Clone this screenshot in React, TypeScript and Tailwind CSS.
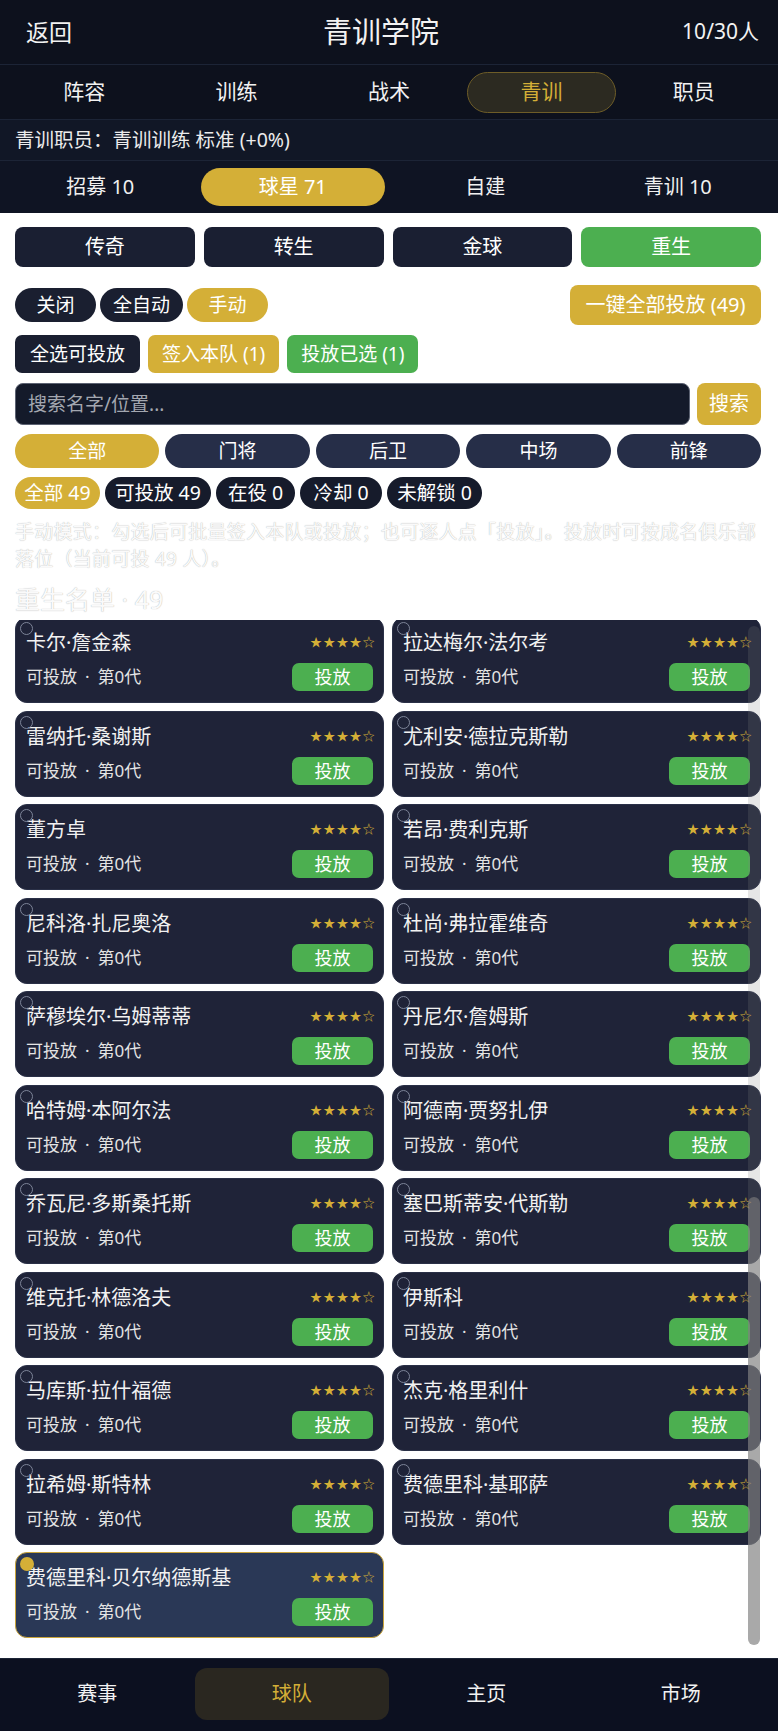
import React from "react";

const FONT = { fontFamily: '"Noto Sans", "Noto Sans CJK SC", sans-serif' };

const players = [
  "卡尔·詹金森",
  "拉达梅尔·法尔考",
  "雷纳托·桑谢斯",
  "尤利安·德拉克斯勒",
  "董方卓",
  "若昂·费利克斯",
  "尼科洛·扎尼奥洛",
  "杜尚·弗拉霍维奇",
  "萨穆埃尔·乌姆蒂蒂",
  "丹尼尔·詹姆斯",
  "哈特姆·本阿尔法",
  "阿德南·贾努扎伊",
  "乔瓦尼·多斯桑托斯",
  "塞巴斯蒂安·代斯勒",
  "维克托·林德洛夫",
  "伊斯科",
  "马库斯·拉什福德",
  "杰克·格里利什",
  "拉希姆·斯特林",
  "费德里科·基耶萨",
  "费德里科·贝尔纳德斯基",
];

function Card({ name, selected }: { name: string; selected: boolean }) {
  return (
    <div
      className={
        "relative h-[86px] rounded-[12px] pl-[10px] pr-[10px] pt-[12px] " +
        (selected
          ? "bg-[#2a3856] border-[1.5px] border-[#c9a43a]"
          : "bg-[#1f2338] border border-[#2a3047]")
      }
    >
      {selected ? (
        <div className="absolute left-[4px] top-[4px] w-[14px] h-[14px] rounded-full bg-[#d4af37]" />
      ) : (
        <div className="absolute left-[4px] top-[4px] w-[13px] h-[13px] rounded-full border-[1.5px] border-[#7d8498]" />
      )}
      <div className="flex items-center justify-between h-[26px]">
        <span className="text-[20px] leading-[26px] text-[#f2f2f2] whitespace-nowrap">{name}</span>
        <span className="text-[12px] leading-none text-[#d4af37] tracking-[1.2px] -mr-[3px]">★★★★☆</span>
      </div>
      <div className="flex items-center justify-between mt-[7px] h-[28px]">
        <span className="text-[17px] text-[#e4e4e4] whitespace-nowrap">
          可投放<span className="mx-[8px]">·</span>第0代
        </span>
        <button className="w-[81px] h-[28px] rounded-[7px] bg-[#4caf50] text-white text-[18px] leading-none">
          投放
        </button>
      </div>
    </div>
  );
}

export default function App() {
  const tabs = ["阵容", "训练", "战术", "青训", "职员"];
  const subTabs = ["招募 10", "球星 71", "自建", "青训 10"];
  const cats = ["传奇", "转生", "金球", "重生"];
  const positions = ["全部", "门将", "后卫", "中场", "前锋"];
  const counts = [
    { t: "全部 49", w: "w-[85px]", active: true },
    { t: "可投放 49", w: "w-[106px]", active: false },
    { t: "在役 0", w: "w-[79px]", active: false },
    { t: "冷却 0", w: "w-[82px]", active: false },
    { t: "未解锁 0", w: "w-[95px]", active: false },
  ];
  const nav = ["赛事", "球队", "主页", "市场"];

  return (
    <div className="w-[778px] h-[1731px] flex flex-col bg-white overflow-hidden" style={FONT}>
      {/* Header */}
      <div className="h-[65px] shrink-0 bg-[#0d111d] border-b border-[#1c2436] flex items-center justify-between pl-[26px] pr-[19px]">
        <span className="text-[23px] text-[#f2f2f2]">返回</span>
        <span className="text-[29px] text-[#f2f2f2] ml-[8px]">青训学院</span>
        <span className="text-[21px] text-[#f2f2f2]">10/30人</span>
      </div>
      {/* Tabs */}
      <div className="h-[55px] shrink-0 bg-[#0d111d] border-b border-[#1c2436] grid grid-cols-5 gap-[4px] px-[10px] items-center">
        {tabs.map((t) => (
          <div
            key={t}
            className={
              "h-[41px] flex items-center justify-center rounded-full text-[21px] " +
              (t === "青训"
                ? "bg-[#2c2a21] border border-[#6e5d28] text-[#d4af37]"
                : "text-[#f2f2f2]")
            }
          >
            {t}
          </div>
        ))}
      </div>
      {/* Info */}
      <div className="h-[41px] shrink-0 bg-[#111726] border-b border-[#1c2436] flex items-center pl-[15px]">
        <span className="text-[19.5px] text-[#ececec]">青训职员：青训训练 标准 (+0%)</span>
      </div>
      {/* Sub tabs */}
      <div className="h-[52px] shrink-0 bg-[#0f1423] grid grid-cols-4 gap-[8px] px-[8px] items-center">
        {subTabs.map((t) => (
          <div
            key={t}
            className={
              "h-[38px] flex items-center justify-center rounded-full text-[20px] " +
              (t === "球星 71" ? "bg-[#d4af37] text-white" : "text-[#f0f0f0]")
            }
          >
            {t}
          </div>
        ))}
      </div>

      {/* White content */}
      <div className="shrink-0 pl-[15px] pr-[17px] pt-[14px]">
        <div className="grid grid-cols-4 gap-[9px]">
          {cats.map((c) => (
            <div
              key={c}
              className={
                "h-[40px] rounded-[8px] flex items-center justify-center text-[20px] text-white " +
                (c === "重生" ? "bg-[#4caf50]" : "bg-[#1a1f32]")
              }
            >
              {c}
            </div>
          ))}
        </div>

        <div className="mt-[18px] h-[40px] flex items-center justify-between">
          <div className="flex gap-[4px]">
            {["关闭", "全自动", "手动"].map((m) => (
              <div
                key={m}
                className={
                  "h-[34px] min-w-[81px] px-[13px] rounded-full flex items-center justify-center text-[19px] text-white " +
                  (m === "手动" ? "bg-[#d4af37]" : "bg-[#1a1f30]")
                }
              >
                {m}
              </div>
            ))}
          </div>
          <div className="h-[40px] w-[191px] rounded-[8px] bg-[#d4af37] flex items-center justify-center text-[20px] text-white">
            一键全部投放 (49)
          </div>
        </div>

        <div className="mt-[10px] flex gap-[8px]">
          <div className="h-[38px] px-[15px] rounded-[7px] bg-[#1a1f30] flex items-center text-[19px] text-white">全选可投放</div>
          <div className="h-[38px] px-[14px] rounded-[7px] bg-[#d4af37] flex items-center text-[19px] text-white">签入本队 (1)</div>
          <div className="h-[38px] px-[14px] rounded-[7px] bg-[#4caf50] flex items-center text-[19px] text-white">投放已选 (1)</div>
        </div>

        <div className="mt-[10px] flex gap-[7px]">
          <div className="flex-1 h-[42px] rounded-[8px] bg-[#141a2a] border-[1.5px] border-[#5c6272] flex items-center pl-[12px] text-[19px] text-[#a3a7b0]">
            搜索名字/位置...
          </div>
          <div className="w-[64px] h-[42px] rounded-[8px] bg-[#d4af37] flex items-center justify-center text-[20px] text-white">
            搜索
          </div>
        </div>

        <div className="mt-[9px] grid grid-cols-5 gap-[6px]">
          {positions.map((p) => (
            <div
              key={p}
              className={
                "h-[34px] rounded-full flex items-center justify-center text-[19px] text-white " +
                (p === "全部" ? "bg-[#d4af37]" : "bg-[#262e48]")
              }
            >
              {p}
            </div>
          ))}
        </div>

        <div className="mt-[9px] flex gap-[5px]">
          {counts.map((c) => (
            <div
              key={c.t}
              className={
                "h-[32px] rounded-full flex items-center justify-center text-[19.5px] text-white whitespace-pre " +
                c.w +
                " " +
                (c.active ? "bg-[#d4af37]" : "bg-[#161b2b]")
              }
            >
              {c.t}
            </div>
          ))}
        </div>

        <p className="mt-[10px] text-[19px] leading-[27px] tracking-[0.25px] text-[#fafafa] [text-shadow:0_0_1px_#a6a6a6]">
          手动模式：勾选后可批量签入本队或投放；也可逐人点「投放」。投放时可按成名俱乐部落位（当前可投 49 人）。
        </p>
        <div className="mt-[11px] h-[30px] text-[25px] leading-[30px] text-[#fafafa] [text-shadow:0_0_1px_#a6a6a6]">
          重生名单 · 49
        </div>
        <div className="h-[6px]" />
      </div>

      {/* List */}
      <div className="relative flex-1 min-h-0 overflow-hidden pl-[15px] pr-[17px]">
        <div className="-mt-[3px] grid grid-cols-2 gap-x-[8px] gap-y-[7.5px]">
          {players.map((p, i) => (
            <Card key={p} name={p} selected={i === players.length - 1} />
          ))}
        </div>
        <div className="absolute right-[18px] top-[6px] bottom-[13px] w-[12px] rounded-full bg-[rgba(128,128,128,0.2)]">
          <div className="absolute left-0 right-0 bottom-0 top-[571px] rounded-full bg-[rgba(128,128,128,0.6)]" />
        </div>
      </div>

      {/* Bottom nav */}
      <div className="h-[73px] shrink-0 bg-[#0c1020] border-t border-[#1c2436] grid grid-cols-4 pt-[9px] pb-[12px]">
        {nav.map((n) => (
          <div
            key={n}
            className={
              "h-[52px] rounded-[12px] flex items-center justify-center text-[20px] " +
              (n === "球队" ? "bg-[#2a2720] text-[#d4af37]" : "text-[#f2f2f2]")
            }
          >
            {n}
          </div>
        ))}
      </div>
    </div>
  );
}
